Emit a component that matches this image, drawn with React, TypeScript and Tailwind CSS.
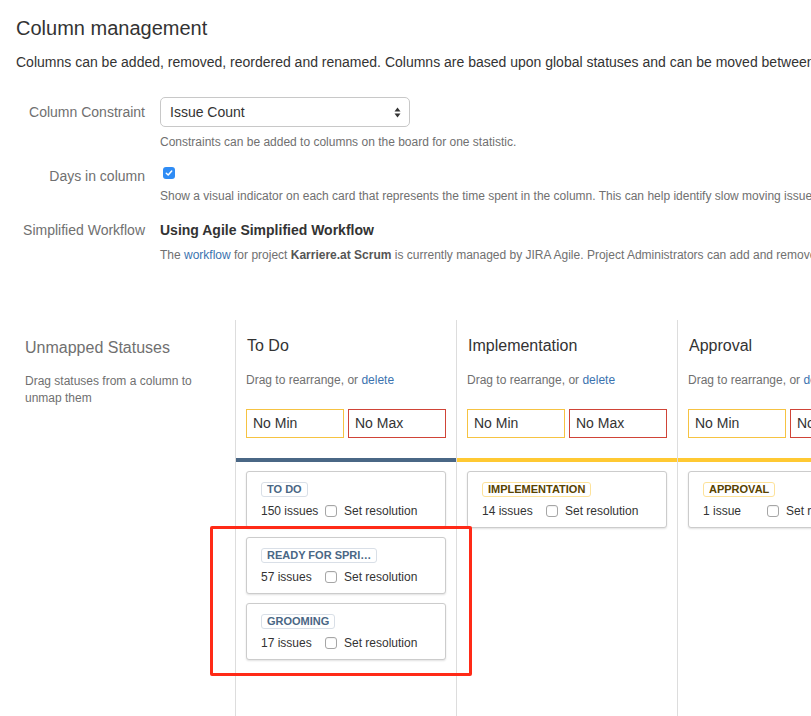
const Checkbox = () => (
  <span className="inline-block w-[12px] h-[12px] shrink-0 rounded-[3px] border border-[#a6a6a6] bg-white shadow-[inset_0_1px_1px_rgba(0,0,0,0.06)]" />
);

type Status = { name: string; count: string; tone: "blue" | "yellow" };

const Lozenge = ({ name, tone }: { name: string; tone: "blue" | "yellow" }) => (
  <span
    className={
      tone === "blue"
        ? "inline-block whitespace-nowrap rounded-[3px] border border-[#d9dfe7] bg-white px-[5px] text-[11px] leading-[13px] font-bold uppercase text-[#4a6785]"
        : "inline-block whitespace-nowrap rounded-[3px] border border-[#fde29a] bg-white px-[5px] text-[11px] leading-[13px] font-bold uppercase text-[#594300]"
    }
  >
    {name}
  </span>
);

const StatusCard = ({ status }: { status: Status }) => (
  <div className="h-[57px] rounded-[3px] border border-[#cccccc] bg-white pt-[10px] pl-[14px] shadow-[0_1px_2px_rgba(0,0,0,0.12)]">
    <div className="flex">
      <Lozenge name={status.name} tone={status.tone} />
    </div>
    <div className="mt-[6px] flex items-center text-[12px] leading-[16px] text-[#333]">
      <span className="w-[64px] shrink-0">{status.count}</span>
      <Checkbox />
      <span className="ml-[7px] whitespace-nowrap">Set resolution</span>
    </div>
  </div>
);

const BoardColumn = ({
  title,
  bar,
  statuses,
}: {
  title: string;
  bar: string;
  statuses: Status[];
}) => (
  <div className="w-[221px] shrink-0 border-l border-[#dddddd] px-[10px] pt-[16px]">
    <h3 className="text-[16px] leading-[20px] text-[#333] pl-[1px]">{title}</h3>
    <p className="mt-[16px] text-[12px] leading-[16px] text-[#707070] whitespace-nowrap">
      Drag to rearrange, or <a className="text-[#3b73af]">delete</a>
    </p>
    <div className="mt-[21px] flex justify-between">
      <div className="flex h-[29px] w-[98px] items-center border border-[#f6c342] pl-[6px] text-[14px] text-[#333]">
        No Min
      </div>
      <div className="flex h-[29px] w-[98px] items-center border border-[#d04437] pl-[6px] text-[14px] text-[#333] whitespace-nowrap">
        No Max
      </div>
    </div>
    <div className={`-mx-[10px] mt-[20px] h-[4px] ${bar}`} />
    <div className="mt-[9px] flex flex-col gap-[9px]">
      {statuses.map((s) => (
        <StatusCard key={s.name} status={s} />
      ))}
    </div>
  </div>
);

export default function App() {
  return (
    <div className="relative min-h-screen w-full overflow-hidden bg-white font-['Liberation_Sans',Arial,sans-serif] text-[#333]">
      <div className="pl-[16px] pt-[16px]">
        <h1 className="text-[20px] leading-[24px] text-[#333]">Column management</h1>
        <p className="mt-[12px] text-[14px] leading-[20px] whitespace-nowrap">
          Columns can be added, removed, reordered and renamed. Columns are based upon global statuses and can be moved between columns.
        </p>
      </div>

      <div className="mt-[25px]">
        <div className="flex items-start">
          <label className="flex h-[30px] w-[145px] shrink-0 items-center justify-end text-[14px] text-[#707070]">
            Column Constraint
          </label>
          <div className="ml-[15px]">
            <div className="flex h-[30px] w-[250px] items-center justify-between rounded-[5px] border border-[#c8c8c8] bg-white pl-[9px] pr-[8px] text-[14px] text-[#333]">
              <span>Issue Count</span>
              <svg width="7" height="11" viewBox="0 0 7 11">
                <path d="M3.5 0.5 L6.5 4.5 L0.5 4.5 Z" fill="#333" />
                <path d="M3.5 10.5 L6.5 6.5 L0.5 6.5 Z" fill="#333" />
              </svg>
            </div>
            <p className="mt-[7px] text-[12px] leading-[16px] text-[#707070] whitespace-nowrap">
              Constraints can be added to columns on the board for one statistic.
            </p>
          </div>
        </div>

        <div className="mt-[16px] flex items-start">
          <label className="w-[145px] shrink-0 text-right text-[14px] leading-[20px] text-[#707070]">
            Days in column
          </label>
          <div className="ml-[15px]">
            <div className="h-[20px]">
              <span className="ml-[3px] mt-[1px] flex h-[12px] w-[12px] items-center justify-center rounded-[3px] bg-[#2f8cf5]">
                <svg width="8" height="8" viewBox="0 0 8 8">
                  <path d="M1.3 4.2 L3.2 6 L6.7 2" stroke="white" strokeWidth="1.5" fill="none" strokeLinecap="round" strokeLinejoin="round" />
                </svg>
              </span>
            </div>
            <p className="mt-[1px] text-[12px] leading-[16px] text-[#707070] whitespace-nowrap">
              Show a visual indicator on each card that represents the time spent in the column. This can help identify slow moving issues.
            </p>
          </div>
        </div>

        <div className="mt-[16px] flex items-start">
          <label className="w-[145px] shrink-0 text-right text-[14px] leading-[20px] text-[#707070]">
            Simplified Workflow
          </label>
          <div className="ml-[15px]">
            <p className="text-[14px] leading-[20px] font-bold text-[#333]">Using Agile Simplified Workflow</p>
            <p className="mt-[7px] text-[12px] leading-[16px] text-[#707070] whitespace-nowrap">
              The <a className="text-[#3b73af]">workflow</a> for project <b className="text-[#555]">Karriere.at Scrum</b> is currently managed by JIRA Agile. Project Administrators can add and remove statuses.
            </p>
          </div>
        </div>
      </div>

      <div className="mt-[57px] flex min-h-[420px] items-stretch">
        <div className="w-[235px] shrink-0 px-[25px] pt-[18px]">
          <h3 className="text-[16px] leading-[20px] text-[#707070]">Unmapped Statuses</h3>
          <p className="mt-[15px] text-[12px] leading-[17px] text-[#707070]">
            Drag statuses from a column to unmap them
          </p>
        </div>
        <BoardColumn
          title="To Do"
          bar="bg-[#4a6785]"
          statuses={[
            { name: "To Do", count: "150 issues", tone: "blue" },
            { name: "Ready for Spri…", count: "57 issues", tone: "blue" },
            { name: "Grooming", count: "17 issues", tone: "blue" },
          ]}
        />
        <BoardColumn
          title="Implementation"
          bar="bg-[#ffc933]"
          statuses={[{ name: "Implementation", count: "14 issues", tone: "yellow" }]}
        />
        <BoardColumn
          title="Approval"
          bar="bg-[#ffc933]"
          statuses={[{ name: "Approval", count: "1 issue", tone: "yellow" }]}
        />
      </div>

      <div className="pointer-events-none absolute left-[210px] top-[526px] h-[150px] w-[262px] rounded-[2px] border-[3px] border-[#ff2a17]" />
    </div>
  );
}
